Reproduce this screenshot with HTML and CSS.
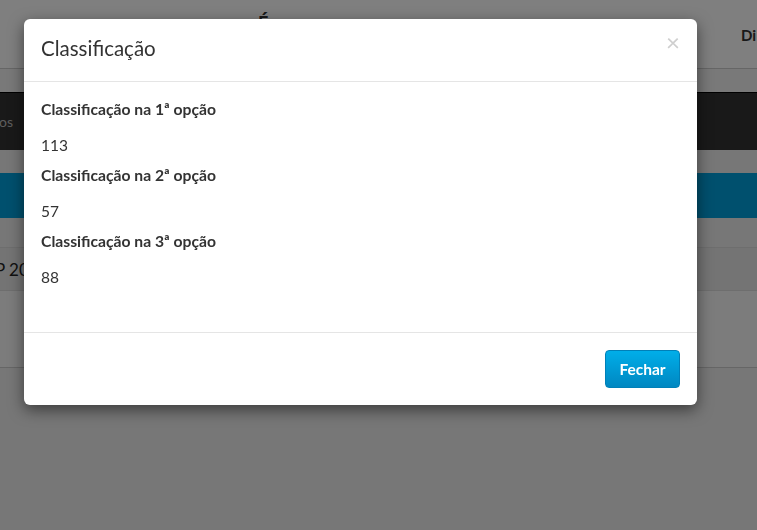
FILE: index.html
```html
<!DOCTYPE html>
<html lang="pt">
<head>
<meta charset="utf-8">
<title>Classificação</title>
<link rel="stylesheet" href="styles.css">
</head>
<body>
<div class="page">
  <header class="topbar">
    <span class="accent">É</span>
    <span class="user">Di</span>
  </header>
  <div class="subbar"></div>
  <nav class="navbar"><span class="navitem">os</span></nav>
  <div class="gap"></div>
  <div class="bluebar"></div>
  <div class="gap2"></div>
  <div class="rowhead"><span>P 20</span></div>
  <div class="rowbody"></div>
  <div class="rest"></div>
</div>
<div class="backdrop"></div>
<div class="modal">
  <div class="modal-header">
    <h4 class="modal-title">Classificação</h4>
    <span class="close">×</span>
  </div>
  <div class="modal-body">
    <div class="item">
      <div class="label">Classificação na 1ª opção</div>
      <div class="value">113</div>
    </div>
    <div class="item">
      <div class="label">Classificação na 2ª opção</div>
      <div class="value">57</div>
    </div>
    <div class="item">
      <div class="label">Classificação na 3ª opção</div>
      <div class="value">88</div>
    </div>
  </div>
  <div class="modal-footer">
    <button class="btn">Fechar</button>
  </div>
</div>
</body>
</html>
```
FILE: styles.css
```css
* { box-sizing: border-box; }
html, body { margin: 0; padding: 0; }
body {
  font-family: Lato, "Open Sans", "Liberation Sans", sans-serif;
  color: #333;
  background: #eee;
  width: 757px;
  height: 530px;
  overflow: hidden;
}
.page { display: flex; flex-direction: column; }
.topbar {
  height: 69px;
  background: #fff;
  border-bottom: 1px solid #ccc;
  position: relative;
  font-size: 15px;
  font-weight: 700;
}
.accent { position: absolute; left: 258px; top: 12px; font-size: 18px; }
.user { position: absolute; left: 741px; top: 26px; }
.subbar { height: 23px; background: #f2f2f2; }
.navbar {
  height: 58px;
  background: #333;
  border-top: 1px solid #000;
  color: #bbb;
  font-size: 14px;
  display: flex;
  align-items: center;
}
.navitem { margin-left: -1px; }
.gap { height: 23px; background: #eee; }
.bluebar { height: 45px; background: #00a0dc; }
.gap2 { height: 30px; background: #eee; border-bottom: 1px solid #ddd; }
.rowhead {
  height: 42px;
  background: #e8e8e8;
  display: flex;
  align-items: center;
  font-size: 17px;
  font-weight: 400;
  color: #222;
}
.rowhead span { margin-left: -5px; }
.rowbody { height: 78px; background: #f9f9f9; border-top: 1px solid #ddd; border-bottom: 1px solid #ccc; }
.rest { flex: 1; }
.backdrop {
  position: fixed;
  inset: 0;
  background: rgba(0, 0, 0, 0.5);
}
.modal {
  position: absolute;
  left: 24px;
  top: 19px;
  width: 673px;
  background: #fff;
  border-radius: 6px;
  box-shadow: 0 5px 15px rgba(0, 0, 0, 0.5);
}
.modal-header {
  height: 63px;
  border-bottom: 1px solid #e5e5e5;
  padding: 0 17px;
  display: flex;
  align-items: center;
  justify-content: space-between;
}
.modal-title {
  margin: -5px 0 0;
  font-size: 20.5px;
  font-weight: 400;
  color: #333;
}
.close {
  font-size: 24px;
  color: #cfcfcf;
  line-height: 1;
  margin-right: 0;
  margin-top: -17px;
}
.modal-body {
  padding: 17px 17px 36px;
  height: 250px;
}
.item { display: flex; flex-direction: column; }
.label {
  font-size: 15.7px;
  font-weight: 700;
  line-height: 20px;
  color: #333;
}
.value {
  font-size: 15.5px;
  line-height: 20px;
  margin-top: 16px;
  margin-bottom: 10px;
  color: #333;
}
.modal-footer {
  border-top: 1px solid #e5e5e5;
  padding: 17px 17px 17px;
  display: flex;
  justify-content: flex-end;
}
.btn {
  width: 75px;
  height: 38px;
  border: 1px solid #0080b8;
  border-radius: 4px;
  background: linear-gradient(#00aee9, #0087c1);
  color: #fff;
  font-family: Lato, "Open Sans", sans-serif;
  font-weight: 700;
  font-size: 15.5px;
  padding: 0;
}
```
